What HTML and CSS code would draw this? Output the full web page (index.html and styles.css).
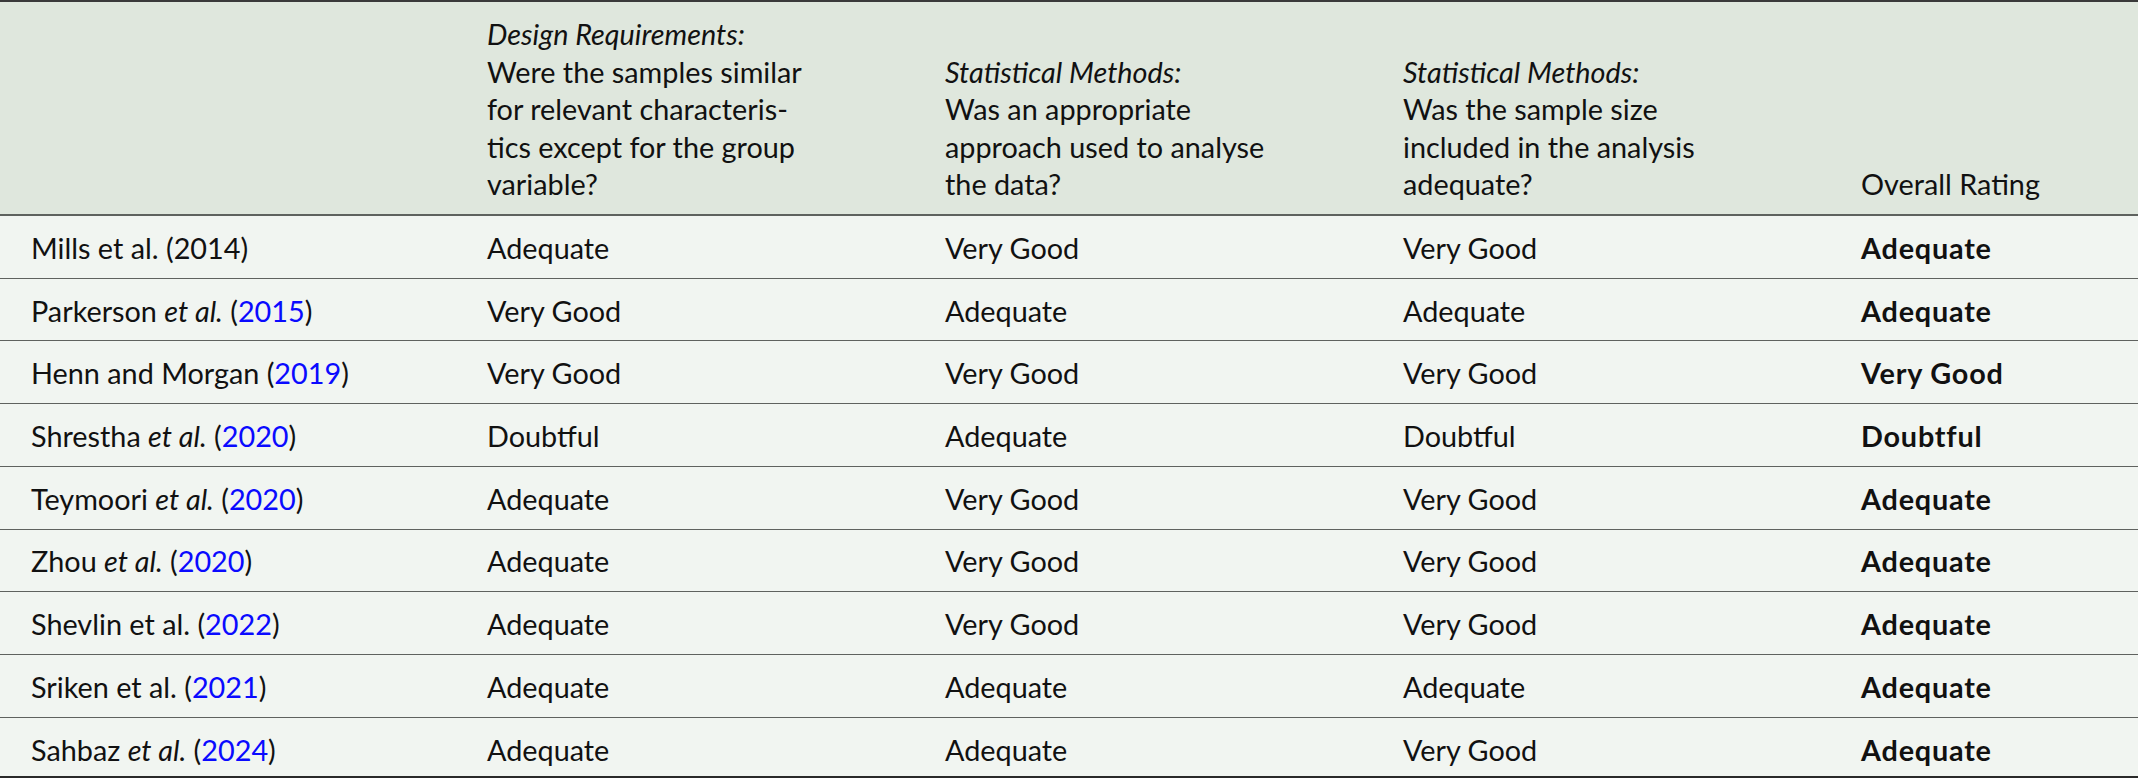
FILE: index.html
```html
<!DOCTYPE html>
<html lang="en">
<head>
<meta charset="utf-8">
<title>Quality rating table</title>
<link rel="stylesheet" href="styles.css">
</head>
<body>
<table class="ratings">
  <colgroup>
    <col class="c-study">
    <col class="c-mid">
    <col class="c-mid">
    <col class="c-mid">
    <col class="c-last">
  </colgroup>
  <thead>
    <tr>
      <th></th>
      <th><em>Design Requirements:</em><br>Were the samples similar<br>for relevant characteris-<br>tics except for the group<br>variable?</th>
      <th><em>Statistical Methods:</em><br>Was an appropriate<br>approach used to analyse<br>the data?</th>
      <th><em>Statistical Methods:</em><br>Was the sample size<br>included in the analysis<br>adequate?</th>
      <th>Overall Rating</th>
    </tr>
  </thead>
  <tbody>
    <tr>
      <td>Mills et al. (2014)</td>
      <td>Adequate</td>
      <td>Very Good</td>
      <td>Very Good</td>
      <td class="overall">Adequate</td>
    </tr>
    <tr>
      <td>Parkerson <em>et al.</em> (<a href="#">2015</a>)</td>
      <td>Very Good</td>
      <td>Adequate</td>
      <td>Adequate</td>
      <td class="overall">Adequate</td>
    </tr>
    <tr>
      <td>Henn and Morgan (<a href="#">2019</a>)</td>
      <td>Very Good</td>
      <td>Very Good</td>
      <td>Very Good</td>
      <td class="overall">Very Good</td>
    </tr>
    <tr>
      <td>Shrestha <em>et al.</em> (<a href="#">2020</a>)</td>
      <td>Doubtful</td>
      <td>Adequate</td>
      <td>Doubtful</td>
      <td class="overall">Doubtful</td>
    </tr>
    <tr>
      <td>Teymoori <em>et al.</em> (<a href="#">2020</a>)</td>
      <td>Adequate</td>
      <td>Very Good</td>
      <td>Very Good</td>
      <td class="overall">Adequate</td>
    </tr>
    <tr>
      <td>Zhou <em>et al.</em> (<a href="#">2020</a>)</td>
      <td>Adequate</td>
      <td>Very Good</td>
      <td>Very Good</td>
      <td class="overall">Adequate</td>
    </tr>
    <tr>
      <td>Shevlin et al. (<a href="#">2022</a>)</td>
      <td>Adequate</td>
      <td>Very Good</td>
      <td>Very Good</td>
      <td class="overall">Adequate</td>
    </tr>
    <tr>
      <td>Sriken et al. (<a href="#">2021</a>)</td>
      <td>Adequate</td>
      <td>Adequate</td>
      <td>Adequate</td>
      <td class="overall">Adequate</td>
    </tr>
    <tr>
      <td>Sahbaz <em>et al.</em> (<a href="#">2024</a>)</td>
      <td>Adequate</td>
      <td>Adequate</td>
      <td>Very Good</td>
      <td class="overall">Adequate</td>
    </tr>
  </tbody>
</table>
</body>
</html>
```

FILE: styles.css
```css
html, body {
  margin: 0;
  padding: 0;
  background: #ffffff;
}

.ratings {
  width: 2138px;
  table-layout: fixed;
  border-collapse: collapse;
  font-family: "Lato", "Liberation Sans", sans-serif;
  font-size: 28.8px;
  color: #111111;
  border-top: 2px solid #3a3a3a;
  border-bottom: 2px solid #2a2a2a;
}

.c-study { width: 456px; }
.c-mid { width: 458px; }
.c-last { width: auto; }

.ratings thead tr {
  background: #dfe7dd;
  border-bottom: 2px solid #5e625e;
}

.ratings th {
  font-weight: normal;
  text-align: left;
  vertical-align: bottom;
  line-height: 37.5px;
  padding: 14px 10px 10.4px 31px;
}

.ratings th em,
.ratings td em {
  font-style: italic;
}

.ratings tbody tr {
  background: #f1f5f1;
  border-bottom: 1px solid #5f625f;
}

.ratings tbody tr:last-child {
  border-bottom: none;
}

.ratings td {
  line-height: 36.5px;
  padding: 13.9px 10px 11.35px 31px;
  white-space: nowrap;
}

.ratings tbody tr:last-child td {
  padding-bottom: 7.6px;
}

.ratings td.overall {
  font-weight: bold;
  letter-spacing: 0.8px;
}

.ratings a {
  color: #0a0aff;
  text-decoration: none;
}
```
